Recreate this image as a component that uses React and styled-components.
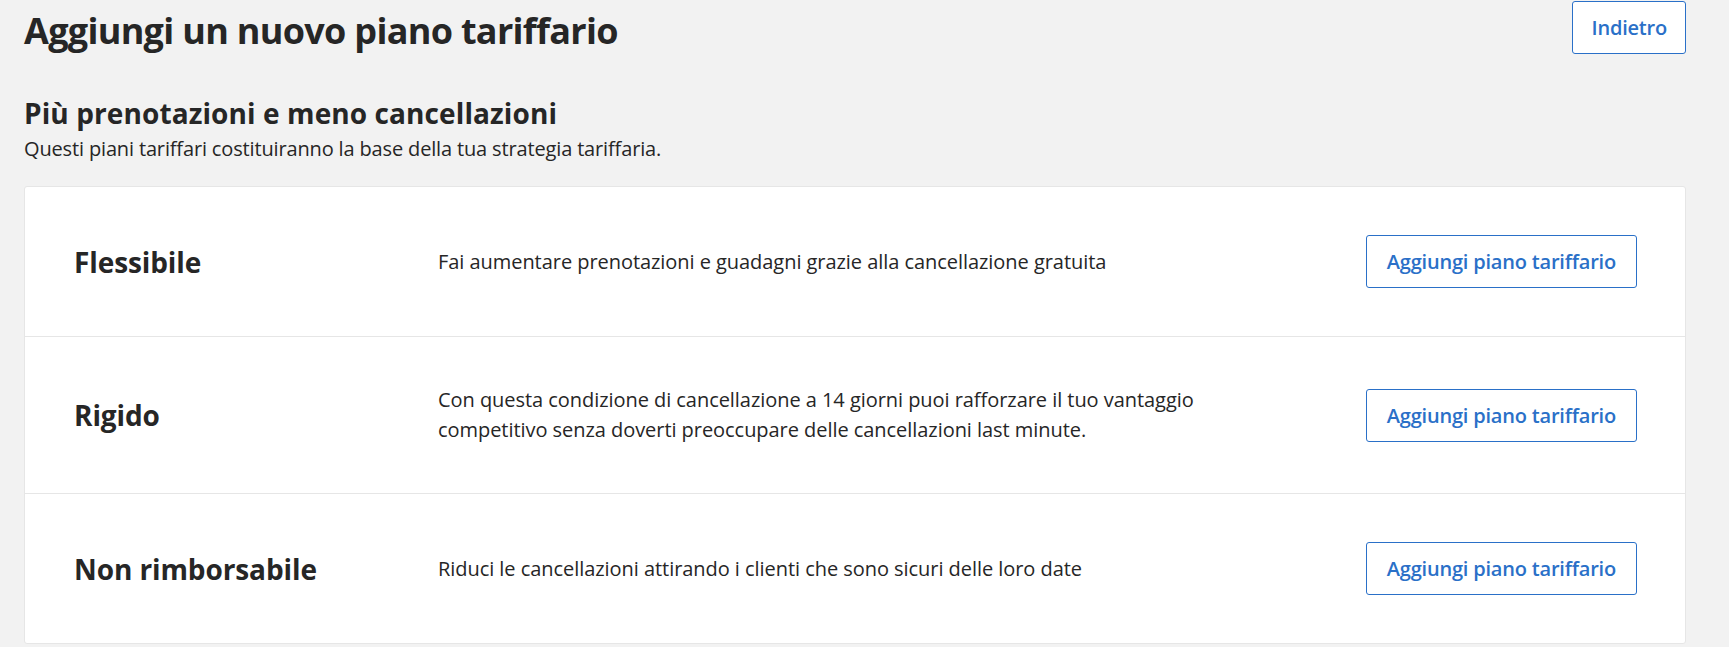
import styled, { createGlobalStyle } from "styled-components";

const plans = [
  {
    id: "flex",
    name: "Flessibile",
    text: "Fai aumentare prenotazioni e guadagni grazie alla cancellazione gratuita",
  },
  {
    id: "strict",
    name: "Rigido",
    text: "Con questa condizione di cancellazione a 14 giorni puoi rafforzare il tuo vantaggio competitivo senza doverti preoccupare delle cancellazioni last minute.",
  },
  {
    id: "nonref",
    name: "Non rimborsabile",
    text: "Riduci le cancellazioni attirando i clienti che sono sicuri delle loro date",
  },
];

export default function App() {
  return (
    <>
      <GlobalStyle />
      <Page>
        <TopBar>
          <Title>Aggiungi un nuovo piano tariffario</Title>
          <OutlineButton>Indietro</OutlineButton>
        </TopBar>

        <Section>
          <SectionTitle>Più prenotazioni e meno cancellazioni</SectionTitle>
          <SectionLead>Questi piani tariffari costituiranno la base della tua strategia tariffaria.</SectionLead>
        </Section>

        <Card>
          {plans.map((plan) => (
            <PlanRow key={plan.id}>
              <PlanName>{plan.name}</PlanName>
              <PlanText>{plan.text}</PlanText>
              <OutlineButton $wide>Aggiungi piano tariffario</OutlineButton>
            </PlanRow>
          ))}
        </Card>
      </Page>
    </>
  );
}

const GlobalStyle = createGlobalStyle`
  * { box-sizing: border-box; }
  body {
    margin: 0;
    background: #f2f2f2;
    font-family: "Open Sans", "Noto Sans", sans-serif;
    color: #262626;
  }
`;

const Page = styled.div`
  padding: 1px 43px 0 24px;
`;

const TopBar = styled.div`
  display: flex;
  justify-content: space-between;
  align-items: flex-start;
`;

const Title = styled.h1`
  margin: 6px 0 0;
  font-size: 36px;
  line-height: 48px;
  font-weight: 700;
  letter-spacing: -0.7px;
`;

const OutlineButton = styled.button`
  flex-shrink: 0;
  height: 53px;
  padding: 0 ${(p) => (p.$wide ? "20px" : "18px")};
  background: #fff;
  border: 1px solid #2a70c8;
  border-radius: 3px;
  color: #2a70c8;
  font-family: inherit;
  font-size: 20px;
  font-weight: 600;
  letter-spacing: -0.2px;
  cursor: pointer;
`;

const Section = styled.div`
  margin-top: 40px;
`;

const SectionTitle = styled.h2`
  margin: 0;
  font-size: 28px;
  line-height: 36px;
  font-weight: 700;
  letter-spacing: 0.1px;
`;

const SectionLead = styled.p`
  margin: 4px 0 0;
  font-size: 20px;
  line-height: 28px;
  letter-spacing: -0.15px;
`;

const Card = styled.div`
  margin-top: 23px;
  background: #fff;
  border: 1px solid #e6e6e6;
  border-radius: 3px;
`;

const PlanRow = styled.div`
  display: grid;
  grid-template-columns: 364px 1fr auto;
  align-items: center;
  padding: 48px 48px 48px 49px;

  & + & {
    border-top: 1px solid #e6e6e6;
  }
`;

const PlanName = styled.div`
  font-size: 28px;
  font-weight: 700;
  letter-spacing: -0.1px;
`;

const PlanText = styled.p`
  margin: 0;
  max-width: 800px;
  font-size: 20px;
  line-height: 30px;
  letter-spacing: -0.05px;
`;
